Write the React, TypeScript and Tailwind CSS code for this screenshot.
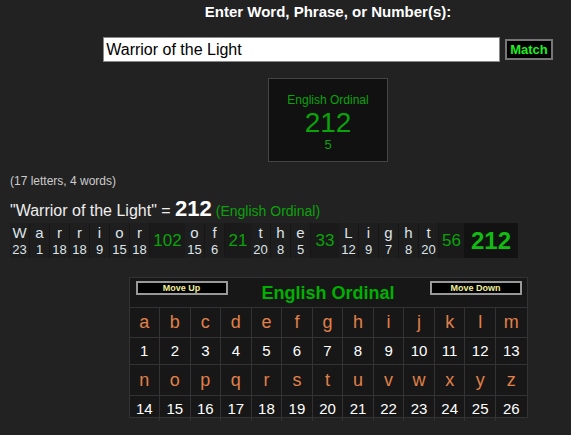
import React from 'react';

// ------------------------------------------------------------
// データ
// ------------------------------------------------------------
const PHRASE = 'Warrior of the Light';
const WORDS = PHRASE.split(' ');
const val = (c: string) => c.toLowerCase().charCodeAt(0) - 96;
const wordSum = (w: string) => w.split('').reduce((s, c) => s + val(c), 0);
const TOTAL = WORDS.reduce((s, w) => s + wordSum(w), 0);

const ALPHA = 'abcdefghijklmnopqrstuvwxyz'.split('');
const HALVES = [ALPHA.slice(0, 13), ALPHA.slice(13)];

const wordCellW: Record<number, string> = {
  0: 'w-[35px]',
  1: 'w-[26px]',
  2: 'w-[28px]',
  3: 'w-[25px]',
};

export default function App() {
  return (
    <div className="min-h-screen bg-[#222222] text-white font-['Liberation_Sans',Arial,sans-serif] overflow-hidden">
      {/* ── 入力 ── */}
      <div className="flex flex-col items-center pl-[85px]">
        <h1 className="pt-[4px] text-[15px] leading-[16px] font-bold text-white">
          Enter Word, Phrase, or Number(s):
        </h1>
        <div className="flex items-center mt-[17px] h-[25px]">
          <input
            readOnly
            value={PHRASE}
            className="w-[397px] h-[25px] bg-white text-black text-[16px] px-[2px] border border-[#888] outline-none"
          />
          <button className="ml-[5px] h-[21px] px-[3px] bg-black border-2 border-[#777] text-[#22ee22] text-[13px] font-bold leading-none">
            Match
          </button>
        </div>

        {/* ── 結果ボックス ── */}
        <div className="mt-[16px] w-[120px] h-[84px] bg-[#111111] border border-[#444] flex flex-col items-center pt-[14px]">
          <span className="text-[12px] leading-[14px] text-[#0aa30a]">English Ordinal</span>
          <span className="text-[28px] leading-[28px] text-[#0aa30a] mt-[2px]">{TOTAL}</span>
          <span className="text-[13px] leading-[14px] text-[#0aa30a] mt-[1px]">5</span>
        </div>
      </div>

      {/* ── サマリー ── */}
      <div className="pl-[10px] mt-[12px] text-[12px] leading-[14px] text-[#cccccc]">
        (17 letters, 4 words)
      </div>
      <div className="pl-[10px] mt-[11px] flex items-baseline leading-[20px]">
        <span className="text-[16px] text-[#eeeeee]">"{PHRASE}" =&nbsp;</span>
        <span className="text-[22px] font-bold text-white">{TOTAL}</span>
        <span className="text-[14px] text-[#0aa30a] ml-[4px]">(English Ordinal)</span>
      </div>

      {/* ── 内訳 ── */}
      <div className="ml-[10px] mt-[2px] inline-flex bg-[#161616] h-[35px]">
        {WORDS.map((w, wi) => (
          <React.Fragment key={wi}>
            {w.split('').map((c, ci) => (
              <div key={ci} className="w-[20px] flex flex-col items-center border-r border-[#161616] bg-[#1e1e1e]">
                <span className="text-[15px] leading-[18px] text-[#dde4ea] pt-[1px]">{c}</span>
                <span className="text-[13px] leading-[15px] text-[#dde4ea]">{val(c)}</span>
              </div>
            ))}
            <div className={`${wordCellW[wi]} flex items-center justify-center bg-[#1a1a1a] text-[17px] text-[#0aa30a]`}>
              {wordSum(w)}
            </div>
          </React.Fragment>
        ))}
        <div className="w-[54px] flex items-center justify-center bg-[#121212] text-[24px] font-bold text-[#11bb11]">
          {TOTAL}
        </div>
      </div>

      {/* ── 暗号表 ── */}
      <div className="flex justify-center pl-[85px] mt-[19px]">
        <div className="w-[399px] bg-[#171717] border border-[#333]">
          <div className="h-[30px] relative flex items-center justify-center border-b border-[#333]">
            <button className="absolute left-[6px] top-[3px] w-[92px] h-[14px] bg-black border-2 border-[#999] text-[9px] font-bold leading-none text-[#eeee99]">
              Move Up
            </button>
            <span className="text-[18px] font-bold text-[#00b000] pt-[2px]">English Ordinal</span>
            <button className="absolute right-[5px] top-[3px] w-[92px] h-[14px] bg-black border-2 border-[#999] text-[9px] font-bold leading-none text-[#eeee99]">
              Move Down
            </button>
          </div>
          {HALVES.map((row, ri) => (
            <React.Fragment key={ri}>
              <div className={`grid grid-cols-13 border-b border-[#333] ${ri === 0 ? 'h-[30px]' : 'h-[31px]'}`}>
                {row.map((c, i) => (
                  <div key={c} className={`flex items-center justify-center text-[18px] text-[#e0804a] ${i < 12 ? 'border-r border-[#333]' : ''}`}>
                    {c}
                  </div>
                ))}
              </div>
              <div className={`grid grid-cols-13 ${ri === 0 ? 'h-[27px] border-b border-[#333]' : 'h-[21px] items-start'}`}>
                {row.map((c, i) => (
                  <div key={c} className={`flex justify-center text-[15px] text-white ${ri === 0 ? 'items-center' : 'items-start pt-[2px]'} ${i < 12 ? 'border-r border-[#333]' : ''}`}>
                    {val(c)}
                  </div>
                ))}
              </div>
            </React.Fragment>
          ))}
        </div>
      </div>
    </div>
  );
}
